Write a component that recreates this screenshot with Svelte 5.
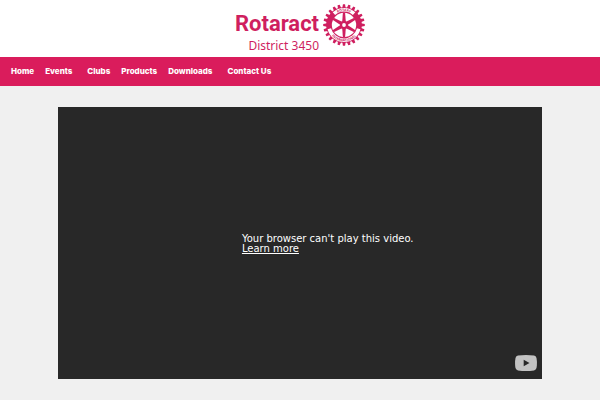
<script lang="ts">
  const links = [
    { label: 'Home' },
    { label: 'Events', menu: true },
    { label: 'Clubs' },
    { label: 'Products' },
    { label: 'Downloads', menu: true },
    { label: 'Contact Us' },
  ];
  const teeth = Array.from({ length: 24 }, (_, i) => i * 15);
  const spokes = [0, 60, 120, 180, 240, 300];
</script>

<header>
  <a class="logo" href="#home" aria-label="Rotaract District 3450">
    <span class="wordmark">
      <span class="name">Rotaract</span>
      <span class="district">District 3450</span>
    </span>
    <svg class="wheel" viewBox="-50 -50 100 100" aria-hidden="true">
      <defs>
        <path id="arc-top" d="M-33 0A33 33 0 0 1 33 0" />
        <path id="arc-bottom" d="M-39 0A39 39 0 0 0 39 0" />
      </defs>
      {#each teeth as angle}
        <path d="M-4-40L-2.6-49.5H2.6L4-40Z" transform="rotate({angle})" />
      {/each}
      <circle r="42.5" />
      <path class="panel" d="M-24-27A36.1 36.1 0 0 1 24-27" />
      <path class="panel" d="M-35 9A36.1 36.1 0 0 0 35 9" />
      <circle class="hole" r="29" />
      {#each spokes as angle}
        <path d="M-4.5-5L-2.6-30H2.6L4.5-5Z" transform="rotate({angle})" />
      {/each}
      <circle r="9.5" />
      <circle class="hole" r="4.5" />
      <text><textPath href="#arc-top" startOffset="50%">ROTARY</textPath></text>
      <text><textPath href="#arc-bottom" startOffset="50%">INTERNATIONAL</textPath></text>
    </svg>
  </a>
</header>

<nav>
  <ul>
    {#each links as link}
      <li class:has-menu={link.menu}><a href="#{link.label}">{link.label}</a></li>
    {/each}
  </ul>
</nav>

<main>
  <section class="player">
    <p>Your browser can't play this video.<br /><a href="#learn-more">Learn more</a></p>
    <button aria-label="Watch on YouTube">
      <svg viewBox="0 0 22 16" aria-hidden="true">
        <path fill="#c3c3c3" d="M3 .6Q11-.4 19 .6 21 1 21.5 3 22.4 8 21.5 13 21 15 19 15.4 11 16.4 3 15.4 1 15 .5 13-.4 8 .5 3 1 1 3 .6Z" />
        <path fill="#282828" d="M8.7 4.7V11.3L14.5 8Z" />
      </svg>
    </button>
  </section>
</main>

<style>
:global(body) { margin: 0; background: #f0f0f0; }
header { display: flex; justify-content: center; background: #fff; height: 57px; }
.logo { display: flex; align-items: flex-start; gap: 4px; padding-top: 4px; color: #cf1f5f; text-decoration: none; }
.wordmark { display: flex; flex-direction: column; align-items: flex-end; padding-top: 7px; }
.name { font: 700 22px/26px Roboto, sans-serif; }
.district { font: 12px/17px "Noto Sans", sans-serif; }
.wheel { width: 42px; height: 42px; fill: #cf1f5f; }
.panel { fill: none; stroke: #fff; stroke-width: 8.5; }
.hole { fill: #fff; }
.wheel text { font: 700 8px "Open Sans", sans-serif; text-anchor: middle; }

nav { background: #da1c5c; }
ul { display: flex; gap: 11px; margin: 0; padding: 0 11px; list-style: none; }
li a { display: block; color: #fff; font: 800 8px/29px Inter, sans-serif; text-decoration: none; }
.has-menu { padding-right: 4px; }

main { display: flex; justify-content: center; padding: 21px 58px; }
.player { flex: 1; display: flex; align-items: center; position: relative; aspect-ratio: 16 / 9; background: #282828; color: #fff; }
.player p { margin: 0 0 0 38%; padding-top: 2px; font: 10px/10px "DejaVu Sans", sans-serif; }
.player a { color: inherit; }
.player button { position: absolute; right: 5px; bottom: 8px; width: 22px; height: 16px; padding: 0; border: 0; background: none; cursor: pointer; }
.player svg { display: block; width: 100%; }
</style>
